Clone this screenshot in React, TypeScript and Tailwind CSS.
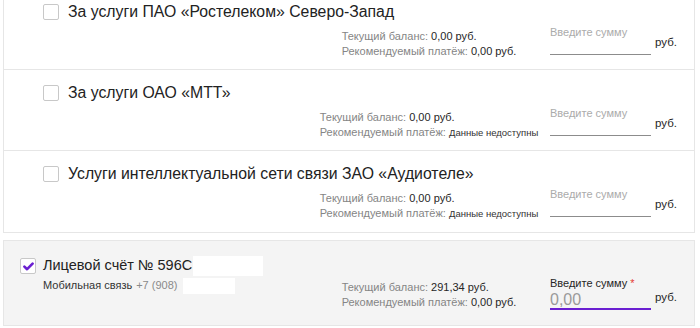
import React from "react";

type Service = {
  title: string;
  balance: string;
  recommended: string;
  unavailable?: boolean;
};

const services: Service[] = [
  { title: "За услуги ПАО «Ростелеком» Северо-Запад", balance: "0,00 руб.", recommended: "0,00 руб." },
  { title: "За услуги ОАО «МТТ»", balance: "0,00 руб.", recommended: "Данные недоступны", unavailable: true },
  {
    title: "Услуги интеллектуальной сети связи ЗАО «Аудиотеле»",
    balance: "0,00 руб.",
    recommended: "Данные недоступны",
    unavailable: true,
  },
];

function Checkbox({ checked }: { checked?: boolean }) {
  return (
    <span className="flex h-4 w-4 shrink-0 items-center justify-center rounded-[2px] border border-[#c8c8c8] bg-white">
      {checked && (
        <svg width="11" height="9" viewBox="0 0 11 9" fill="none">
          <path d="M1.4 4.6 L4.1 7.2 L9.6 1.6" stroke="#6a1fd1" strokeWidth="2.6" strokeLinecap="round" strokeLinejoin="round" />
        </svg>
      )}
    </span>
  );
}

function Info({ balance, recommended, unavailable }: { balance: string; recommended: string; unavailable?: boolean }) {
  return (
    <div className="flex w-[238px] shrink-0 justify-center pt-[4px]">
      <div className="text-[11px] leading-[15px] text-[#858585]">
        <div>
          Текущий баланс: <span className="text-[#262626]">{balance}</span>
        </div>
        <div className="whitespace-nowrap">
          Рекомендуемый платёж:{" "}
          {unavailable ? (
            <span className="text-[9.5px] text-[#333]">{recommended}</span>
          ) : (
            <span className="text-[#262626]">{recommended}</span>
          )}
        </div>
      </div>
    </div>
  );
}

function AmountInput({ active }: { active?: boolean }) {
  return (
    <>
      <div className="ml-[2px] w-[101px] shrink-0">
        {active ? (
          <div className="text-[11px] leading-[14px] text-[#262626]">
            Введите сумму <span className="text-[#e53935]">*</span>
          </div>
        ) : (
          <div className="text-[11px] leading-[14px] text-[#ababab]">Введите сумму</div>
        )}
        {active ? (
          <div className="mt-px flex h-[19px] items-center border-b-2 border-[#6a1fd1] text-[16px] leading-[16px] text-[#9a9a9a]">
            0,00
          </div>
        ) : (
          <div className="h-4 border-b border-[#8c8c8c]" />
        )}
      </div>
      <div className={`ml-1 w-[39px] shrink-0 text-[11.5px] leading-[14px] text-[#262626] ${active ? "mt-[14px]" : "mt-[10px]"}`}>
        руб.
      </div>
    </>
  );
}

export default function App() {
  return (
    <div
      className="h-[328px] w-[700px] overflow-hidden bg-white"
      style={{ fontFamily: "'Liberation Sans', Arial, sans-serif" }}
    >
      <div className="-mt-3 ml-[3px] w-[692px] divide-y divide-[#e6e6e6] border border-[#e6e6e6]">
        {services.map((s) => (
          <div key={s.title} className="h-[81px] pl-[39px] pt-[13px]">
            <div className="flex h-5 items-center gap-[9px]">
              <Checkbox />
              <div className="text-[15.8px] text-[#222]">{s.title}</div>
            </div>
            <div className="mt-[3px] flex">
              <div className="flex-1" />
              <Info balance={s.balance} recommended={s.recommended} unavailable={s.unavailable} />
              <AmountInput />
            </div>
          </div>
        ))}
      </div>

      <div className="ml-[3px] mt-[7px] h-[86px] w-[692px] border border-[#e6e6e6] bg-[#f4f4f4] pl-4 pt-[15px]">
        <div className="flex h-5 items-center gap-[7px]">
          <Checkbox checked />
          <div className="flex items-center text-[#222]">
            <span className="whitespace-nowrap text-[14.5px]">Лицевой счёт № 596С</span>
            <span className="ml-px inline-block h-5 w-[70px] bg-white" />
          </div>
        </div>
        <div className="flex">
          <div className="flex flex-1 items-start pl-[23px] pt-[2px]">
            <span className="text-[11px] leading-[15px] font-medium text-[#333]">Мобильная связь</span>
            <span className="ml-1 text-[11px] leading-[15px] text-[#8a8a8a]">+7 (908)</span>
            <span className="ml-[6px] inline-block h-4 w-[52px] bg-white" />
          </div>
          <Info balance="291,34 руб." recommended="0,00 руб." />
          <AmountInput active />
        </div>
      </div>
    </div>
  );
}
